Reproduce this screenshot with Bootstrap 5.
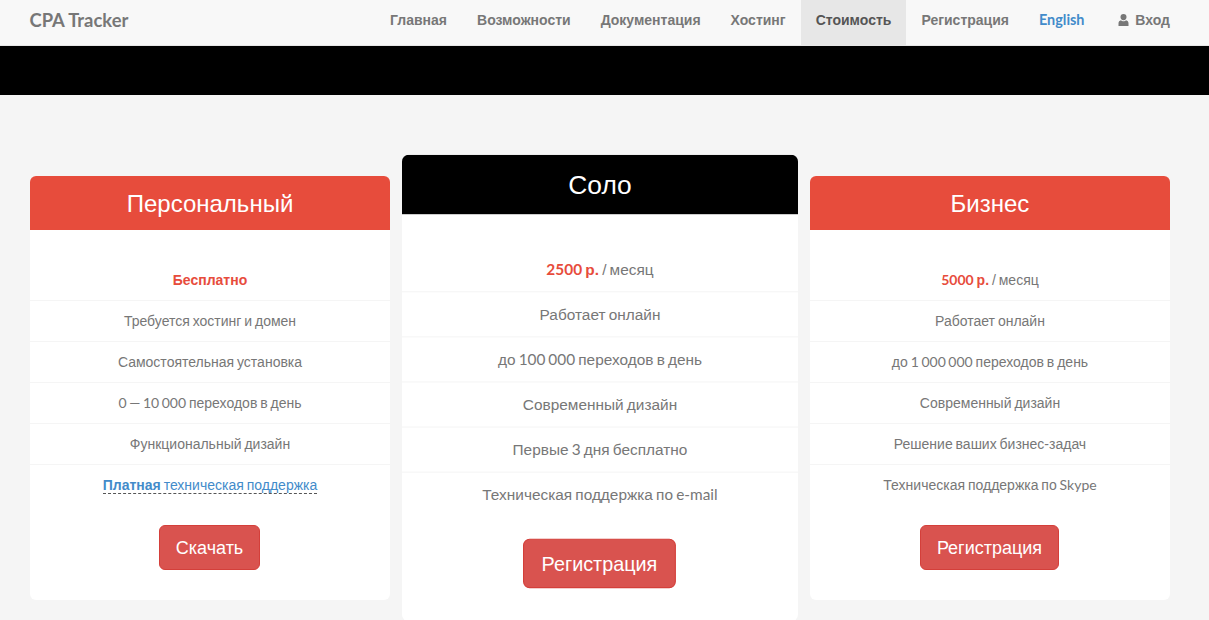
<!DOCTYPE html>
<html lang="ru">
<head>
    <title>CPA Tracker</title>
    <meta charset="UTF-8">
    <meta name="viewport" content="width=device-width, initial-scale=1.0">
    <link href="https://cdn.jsdelivr.net/npm/bootstrap@5.3.3/dist/css/bootstrap.min.css" rel="stylesheet">
    <style>
        body { background: #f5f5f5; font-family: "Liberation Sans", Arial, sans-serif; font-size: 14px; line-height: 20px; color: #777; }
        .lat { font-family: Lato, "Liberation Sans", sans-serif; }
        .top-nav { background: #f8f8f8; border-bottom: 1px solid #e7e7e7; height: 46px; padding: 0; align-items: flex-start; }
        .top-inner { width: 1200px; padding: 0 15px; }
        .top-nav .navbar-brand { color: #777; font-family: Lato, sans-serif; font-size: 18.4px; line-height: 20px; padding: 0; margin: 0 0 5px 14.5px; font-weight: 700; }
        .top-nav .navbar-nav .nav-link { color: #777; font-size: 14px; font-weight: 700; line-height: 15px; padding: 13px 15px 17px; }
        .top-nav .navbar-nav .nav-link.active { background: #e7e7e7; color: #555; }
        .top-nav .navbar-nav .nav-link.lang-link { color: #428bca; font-family: Lato, sans-serif; font-size: 14.4px; padding-top: 12px; padding-bottom: 18px; margin-right: 4px; }
        .user-ico { width: 11px; height: 12px; vertical-align: -1px; margin-right: 2px; fill: #777; }
        .black-band { background: #000; height: 49px; }
        .price-wrap { width: 1200px; padding: 81px 15px 40px; }
        .price-col { padding: 0 15px; }
        .price-box { background: #fff; border-radius: 6px; overflow: hidden; padding-bottom: 30px; }
        .price-box.solo { transform: scale(1.1); position: relative; z-index: 2; }
        .price-head { background: #e74c3c; color: #fff; font-size: 24px; line-height: 55px; height: 54px; text-align: center; }
        .solo .price-head { background: #000; }
        .price-list { list-style: none; margin: 0; padding: 30px 0 0; text-align: center; word-spacing: -1px; }
        .price-list li { padding: 10px 0; border-bottom: 1px solid #f5f5f5; }
        .price-list li:last-child { border-bottom: 0; }
        .price-tag { color: #e74c3c; font-weight: 700; }
        .paid-link { color: #428bca; text-decoration: none; border-bottom: 1px dashed #555; }
        .buy-row { text-align: center; padding-top: 20px; }
        .buy-btn { background: #d9534f; border: 1px solid #d43f3a; color: #fff; font-size: 18px; line-height: 23px; padding: 10.5px 16px 9.5px; border-radius: 6px; margin-right: 1px; }
    </style>
</head>
<body>
    <nav class="navbar navbar-expand top-nav">
        <div class="top-inner d-flex justify-content-between align-items-center">
            <a class="navbar-brand" href="#">CPA Tracker</a>
            <ul class="navbar-nav">
                <li class="nav-item"><a class="nav-link" href="#">Главная</a></li>
                <li class="nav-item"><a class="nav-link" href="#">Возможности</a></li>
                <li class="nav-item"><a class="nav-link" href="#">Документация</a></li>
                <li class="nav-item"><a class="nav-link" href="#">Хостинг</a></li>
                <li class="nav-item"><a class="nav-link active" href="#">Стоимость</a></li>
                <li class="nav-item"><a class="nav-link" href="#">Регистрация</a></li>
                <li class="nav-item"><a class="nav-link lang-link" href="#">English</a></li>
                <li class="nav-item"><a class="nav-link" href="#"><svg class="user-ico" viewBox="0 0 11 12"><ellipse cx="5.5" cy="3.1" rx="3" ry="3.1"/><path d="M0.5 12V9.4C0.5 7.6 1.4 6.6 3 6.2 3.6 6.8 4.5 7.3 5.5 7.3S7.4 6.8 8 6.2C9.6 6.6 10.5 7.6 10.5 9.4V12H0.5Z"/></svg> Вход</a></li>
            </ul>
        </div>
    </nav>
    <div class="black-band"></div>

    <div class="price-wrap">
        <div class="row gx-0">
            <div class="col-4 price-col">
                <div class="price-box">
                    <div class="price-head">Персональный</div>
                    <ul class="price-list">
                        <li><span class="price-tag">Бесплатно</span></li>
                        <li>Требуется хостинг и домен</li>
                        <li>Самостоятельная установка</li>
                        <li><span class="lat">0 — 10 000</span> переходов в день</li>
                        <li>Функциональный дизайн</li>
                        <li><a class="paid-link" href="#"><strong>Платная</strong> техническая поддержка</a></li>
                    </ul>
                    <div class="buy-row"><a class="btn buy-btn" href="#">Скачать</a></div>
                </div>
            </div>
            <div class="col-4 price-col">
                <div class="price-box solo">
                    <div class="price-head">Соло</div>
                    <ul class="price-list">
                        <li><span class="price-tag"><span class="lat">2500</span> р.</span> / месяц</li>
                        <li>Работает онлайн</li>
                        <li>до <span class="lat">100 000</span> переходов в день</li>
                        <li>Современный дизайн</li>
                        <li>Первые <span class="lat">3</span> дня бесплатно</li>
                        <li>Техническая поддержка по <span class="lat">e-mail</span></li>
                    </ul>
                    <div class="buy-row"><a class="btn buy-btn" href="#">Регистрация</a></div>
                </div>
            </div>
            <div class="col-4 price-col">
                <div class="price-box">
                    <div class="price-head">Бизнес</div>
                    <ul class="price-list">
                        <li><span class="price-tag"><span class="lat">5000</span> р.</span> / месяц</li>
                        <li>Работает онлайн</li>
                        <li>до <span class="lat">1 000 000</span> переходов в день</li>
                        <li>Современный дизайн</li>
                        <li>Решение ваших бизнес-задач</li>
                        <li>Техническая поддержка по <span class="lat">Skype</span></li>
                    </ul>
                    <div class="buy-row"><a class="btn buy-btn" href="#">Регистрация</a></div>
                </div>
            </div>
        </div>
    </div>

    <script src="https://cdn.jsdelivr.net/npm/bootstrap@5.3.3/dist/js/bootstrap.bundle.min.js"></script>
</body>
</html>
